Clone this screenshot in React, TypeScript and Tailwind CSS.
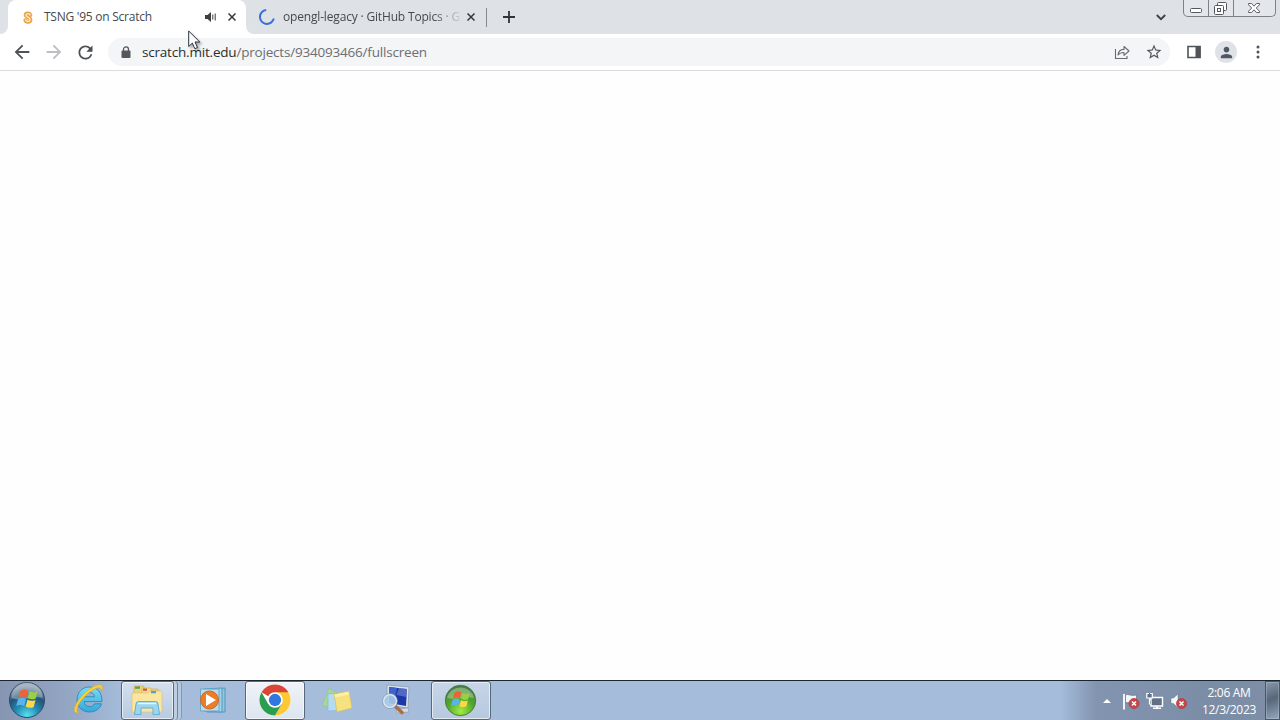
import React from 'react';

const UI_FONT = "font-['Open_Sans','Noto_Sans',sans-serif]";

const MaterialIcon: React.FC<{ d: string; size: number; className?: string }> = ({ d, size, className }) => (
  <svg width={size} height={size} viewBox="0 0 24 24" fill="currentColor" className={`shrink-0 ${className ?? ''}`}>
    <path d={d} />
  </svg>
);

const ARROW_BACK = 'M20 11H7.83l5.59-5.59L12 4l-8 8 8 8 1.41-1.41L7.83 13H20v-2z';
const ARROW_FORWARD = 'M4 11h12.17l-5.59-5.59L12 4l8 8-8 8-1.41-1.41L16.17 13H4v-2z';
const REFRESH =
  'M17.65 6.35A7.958 7.958 0 0 0 12 4c-4.42 0-7.99 3.58-7.99 8s3.57 8 7.99 8c3.73 0 6.84-2.55 7.73-6h-2.08A5.99 5.99 0 0 1 12 18c-3.31 0-6-2.69-6-6s2.69-6 6-6c1.66 0 3.14.69 4.22 1.78L13 11h7V4l-2.35 2.35z';
const STAR =
  'M22 9.24l-7.19-.62L12 2 9.19 8.63 2 9.24l5.46 4.73L5.82 21 12 17.27 18.18 21l-1.63-7.03L22 9.24zM12 15.4l-3.76 2.27 1-4.28-3.32-2.88 4.38-.38L12 6.1l1.71 4.04 4.38.38-3.32 2.88 1 4.28L12 15.4z';
const PERSON = 'M12 12c2.21 0 4-1.79 4-4s-1.79-4-4-4-4 1.79-4 4 1.79 4 4 4zm0 2c-2.67 0-8 1.34-8 4v2h16v-2c0-2.66-5.33-4-8-4z';

const CloseIcon = () => (
  <svg width="8" height="8" viewBox="0 0 8 8" className="shrink-0">
    <path d="M0.5 0.5l7 7M7.5 0.5l-7 7" stroke="#34373b" strokeWidth="1.5" />
  </svg>
);

const ScratchIcon = () => (
  <svg width="10" height="13" viewBox="0 0 10 13" className="shrink-0">
    <path
      d="M7.3 4C6.7 2.1 3 1.7 2.7 4C2.4 6.2 7.6 5.8 7.4 8.8C7.2 11.2 3 11.4 2.4 9.2"
      fill="none"
      stroke="#e9a54a"
      strokeWidth="4"
      strokeLinecap="round"
      strokeLinejoin="round"
    />
    <path
      d="M7.2 3.9C6.3 2.4 3.2 2.3 2.9 4.1C2.7 6 7.3 6 7.1 8.7C6.9 10.9 3.3 10.9 2.5 9"
      fill="none"
      stroke="#fff3df"
      strokeWidth="1.2"
      strokeLinecap="round"
    />
  </svg>
);

const TabStrip = () => (
  <div className="flex h-[34px] shrink-0 bg-[#dee1e6]">
    <div className="flex w-2 items-end bg-white">
      <div className="h-[34px] w-2 rounded-br-lg bg-[#dee1e6]" />
    </div>
    <div className="flex w-[238px] items-center rounded-t-lg bg-white pr-[10px] pl-[15px]">
      <ScratchIcon />
      <span className="ml-[11px] flex-1 whitespace-nowrap text-[12px] tracking-[-0.25px] text-[#45494d]">
        TSNG '95 on Scratch
      </span>
      <svg width="12" height="10" viewBox="0 0 12 10" className="mr-[11px] shrink-0">
        <path d="M0 3h2.500L6 0v10L2.500 7H0z" fill="#3c4043" />
        <path d="M7.800 2.500v5M10.200 1.500v7" stroke="#3c4043" strokeWidth="1" />
      </svg>
      <CloseIcon />
    </div>
    <div className="flex bg-white">
      <div className="flex w-[241px] items-center rounded-bl-lg bg-[#dee1e6] pr-3 pl-[13px]">
        <svg width="16" height="16" viewBox="0 0 16 16" className="shrink-0">
          <path d="M7.200 1A7 7 0 1 0 14.800 9.500" fill="none" stroke="#3b70d9" strokeWidth="2" />
        </svg>
        <div className="ml-[8px] w-[178px] whitespace-nowrap text-[12px] tracking-[-0.17px] text-[#45494d] [mask-image:linear-gradient(to_right,black_150px,transparent_180px)]">
          opengl-legacy · GitHub Topics · G
        </div>
        <div className="ml-auto">
          <CloseIcon />
        </div>
      </div>
    </div>
    <div className="mt-2 -ml-px h-[19px] w-px bg-[#85888d]" />
    <svg width="12" height="12" viewBox="0 0 12 12" className="mt-[11px] ml-4">
      <path d="M6 0v12M0 6h12" stroke="#303438" strokeWidth="1.800" />
    </svg>
    <svg width="10" height="7" viewBox="0 0 10 7" className="mt-[14px] mr-[17px] ml-auto">
      <path d="M.8 1L5 5.200 9.200 1" fill="none" stroke="#3c4043" strokeWidth="1.800" />
    </svg>
    <WindowButtons />
  </div>
);

const WindowButtons = () => (
  <div className="mr-[4px] flex h-[17px] w-[93px] rounded-b-[5px] border border-t-0 border-[#7d8188] bg-[#e3e6ea]">
    <div className="w-[25px] border-r border-[#7d8188]">
      <svg width="24" height="16" viewBox="0 0 24 16">
        <rect x="6.5" y="8.5" width="11" height="4" rx="1" fill="#fff" stroke="#535860" />
      </svg>
    </div>
    <div className="w-[25px] border-r border-[#7d8188]">
      <svg width="24" height="16" viewBox="0 0 24 16" fill="#fff" stroke="#535860">
        <rect x="8.5" y="2.5" width="9" height="8" rx="1" />
        <rect x="5.5" y="5.5" width="9" height="9" rx="1" />
        <rect x="8.5" y="8.5" width="3" height="3" />
      </svg>
    </div>
    <svg width="41" height="16" viewBox="0 0 41 16">
      <path
        d="M14.5 3.5h3l2.5 2.7 2.5-2.7h3v1.3L22.3 8l3.2 3.3v1.2h-3L20 9.8l-2.5 2.7h-3v-1.2L17.7 8l-3.2-3.2z"
        fill="#fff"
        stroke="#5a5f66"
      />
    </svg>
  </div>
);

const Toolbar = () => (
  <div className="flex h-[37px] shrink-0 items-center border-b border-[#dadce0] bg-white pr-[11px] pl-[11px]">
    <MaterialIcon d={ARROW_BACK} size={22} className="text-[#4f5357]" />
    <MaterialIcon d={ARROW_FORWARD} size={22} className="ml-[10px] text-[#bcbec1]" />
    <MaterialIcon d={REFRESH} size={21} className="ml-[10px] text-[#4b4f53]" />
    <div className="ml-3 flex h-7 w-[1062px] items-center rounded-full bg-[#f4f5f6] pr-[7px] pl-[13px]">
      <svg width="10" height="13" viewBox="0 0 10 13" className="shrink-0">
        <path d="M2.5 5V3.400a2.500 2.500 0 0 1 5 0V5" fill="none" stroke="#54585c" strokeWidth="1.300" />
        <rect x=".5" y="4.5" width="9" height="7.5" rx="1" fill="#54585c" />
      </svg>
      <div className="ml-[11px] flex-1 whitespace-nowrap text-[13.5px] tracking-[-0.2px] text-[#6b6f73]">
        <span className="text-[#2b2e31]">scratch.mit.edu</span>/projects/934093466/fullscreen
      </div>
      <svg width="16" height="16" viewBox="0 0 16 16" fill="none" stroke="#676b6f" strokeWidth="1.1" className="mr-[15px]">
        <path d="M1.500 5v9.500h11.500V12" />
        <path d="M4 11c.4-3.700 2.300-5.500 6-5.600V2.500L15 7l-5 4.300V8.500C7 8.500 5.300 9.300 4 11z" strokeLinejoin="round" />
      </svg>
      <MaterialIcon d={STAR} size={18} className="text-[#54585c]" />
    </div>
    <svg width="14" height="14" viewBox="0 0 14 14" className="ml-[17px]">
      <path d="M1 1.500h12v11H1z" fill="#fff" stroke="#505357" strokeWidth="1.600" />
      <path d="M8.500 1h5v12h-5z" fill="#505357" />
    </svg>
    <div className="ml-[14px] flex h-[22px] w-[22px] items-center justify-center rounded-full bg-[#dfe2e7]">
      <MaterialIcon d={PERSON} size={17} className="text-[#505963]" />
    </div>
    <svg width="4" height="14" viewBox="0 0 4 14" fill="#505357" className="ml-auto mr-[9px]">
      <circle cx="2" cy="2" r="1.5" />
      <circle cx="2" cy="7" r="1.5" />
      <circle cx="2" cy="12" r="1.5" />
    </svg>
  </div>
);

// Four waving panes, shared by both Windows buttons
const WindowsFlag = () => (
  <g>
    <path d="M12 10c3-2 6-2 8-.500l-1.700 7c-2.500-1.400-5-1.300-8 .200z" fill="#ed6335" />
    <path d="M21.500 10.300c3 1.500 5.500 1.400 8 .200l-1.800 7c-2.700 1.400-5.200 1-8-.400z" fill="#9bcf45" />
    <path d="M10 18.200c3-1.600 5.500-1.500 8-.200l-1.800 7c-2.400-1.500-5-1.500-8 0z" fill="#58b4ee" />
    <path d="M19.500 18.700c2.800 1.500 5.300 1.500 8 .200l-1.800 7c-2.600 1.300-5.200 1.200-8-.400z" fill="#ffd747" />
  </g>
);

const StartOrb = () => (
  <svg width="38" height="38" viewBox="0 0 38 38">
    <defs>
      <radialGradient id="orb" cx=".5" cy=".95" r=".85">
        <stop offset="0" stopColor="#59e2f2" />
        <stop offset=".4" stopColor="#218bb3" />
        <stop offset=".72" stopColor="#255375" />
        <stop offset="1" stopColor="#8c9cae" />
      </radialGradient>
    </defs>
    <circle cx="19" cy="19" r="17.5" fill="url(#orb)" stroke="#294b69" />
    <path d="M3.500 17a15.500 15.500 0 0 1 31 0c-8-3-22 4-31 0z" fill="#d2dce4" opacity=".4" />
    <WindowsFlag />
  </svg>
);

const ExplorerE = () => (
  <svg width="34" height="34" viewBox="0 0 34 34">
    <defs>
      <linearGradient id="ie" x1="0" y1="0" x2="0" y2="1">
        <stop offset="0" stopColor="#79dcf7" />
        <stop offset="1" stopColor="#35a7da" />
      </linearGradient>
    </defs>
    <path
      d="M17.500 5C9.700 5 5 10.800 5 17.700C5 25 10.300 30 17.500 30c6 0 10.500-3.200 12-8.200h-7c-1 1.800-2.600 2.800-4.800 2.800c-3.300 0-5.300-2-5.500-5h17.700C30.500 11 25.300 5 17.500 5zM12.400 14.800c.600-2.800 2.500-4.300 5.200-4.300s4.600 1.500 5 4.300z"
      fill="url(#ie)"
      stroke="#2482b0"
      strokeWidth=".8"
      fillRule="evenodd"
    />
    <path
      d="M6.500 30.500C1.500 32 1 27 5 20.500C10 12 19 4.500 26 2.800C30 2 31.500 4.500 30 9.500C29.300 6 27.500 5 24 6.500C17 9.500 9.500 17 6.500 23C4.300 27.500 4.500 29.500 6.500 30.500z"
      fill="#f8ce3a"
      stroke="#d5a52b"
      strokeWidth=".5"
    />
  </svg>
);

const FolderIcon = () => (
  <svg width="34" height="32" viewBox="0 0 34 32">
    <path d="M4 2h10v3h14v22H4z" fill="#efd27c" stroke="#cdb05c" strokeWidth=".7" />
    <path d="M12 4h9v3h9v20H12z" fill="#f5da85" stroke="#d3b665" strokeWidth=".7" />
    <path d="M2 9h16l2-2h11l1 1v20H2z" fill="#fae6a0" stroke="#dcc174" strokeWidth=".7" />
    <path d="M5 2.500h5v2.300H5z" fill="#45a95a" />
    <path d="M13 4.500h4v2.300h-4z" fill="#c9603d" />
    <path d="M21 7h5v2.300h-5z" fill="#52a0cf" />
    <path d="M6 20q0-2.500 2.500-2.500h17q2.500 0 2.500 2.500l1.500 10.500h-6.500V24H11v6.500H4.500z" fill="#9bd6f0" stroke="#67afd3" />
    <path d="M8 19.500h18" stroke="#e2f7ff" strokeWidth="1.5" />
  </svg>
);

const MediaPlayerIcon = () => (
  <svg width="28" height="28" viewBox="0 0 28 28">
    <path d="M8 4l18-2v24H8z" fill="#8fc6e0" stroke="#5598bd" />
    <path d="M5 3l18-1v24L5 25z" fill="#a6d2e7" stroke="#5598bd" />
    <path d="M1.500 3H20v22H1.500z" fill="#bbdbeb" stroke="#68a8c9" />
    <circle cx="10.5" cy="14" r="9" fill="#ec7c26" stroke="#c7682c" />
    <path d="M7 8l10 6-10 6z" fill="#fff" />
  </svg>
);

const ChromeIcon = () => (
  <svg width="34" height="34" viewBox="0 0 48 48">
    <circle cx="24" cy="24" r="22" fill="#fff" />
    <path d="M24 24L4.950 13A22 22 0 0 1 43.050 13z" fill="#db4538" />
    <path d="M24 13h19.050A22 22 0 0 1 24 46l9.530-16.500z" fill="#fcc934" />
    <path d="M14.470 29.500L4.950 13A22 22 0 0 0 24 46l9.530-16.500z" fill="#2c9c50" />
    <circle cx="24" cy="24" r="11" fill="#fff" />
    <circle cx="24" cy="24" r="8.7" fill="#3078df" />
  </svg>
);

const StickyNotesIcon = () => (
  <svg width="32" height="28" viewBox="0 0 32 28">
    <path d="M8 1l8 5-5 16-10-4z" fill="#a8d59a" stroke="#8bbd87" strokeWidth=".5" />
    <path d="M7 7l12-1 1 17-13 1z" fill="#b4dcf0" stroke="#77b3d3" strokeWidth=".5" />
    <path d="M13 7l15-3 3 17-15 4z" fill="#f6e180" stroke="#d4bb57" strokeWidth=".6" />
    <path d="M13.500 7.500l14-2.800.500 3-14 2.800z" fill="#fdf0a5" />
  </svg>
);

const ComputerSearchIcon = () => (
  <svg width="32" height="32" viewBox="0 0 32 32">
    <path d="M5 1l22 2-1 21-21-3z" fill="#dce3ec" stroke="#8c9cb0" strokeWidth=".8" />
    <path d="M7 3l18 2-1 17-17-3z" fill="#1d37a8" />
    <path d="M7 3l8 .900-3 16-5-1z" fill="#3e63c9" />
    <path d="M17 4l8 1-.500 8-10-2z" fill="#7893dc" opacity=".55" />
    <path d="M14 25l12-1 1 4-12 1z" fill="#d5dbe1" stroke="#8994a1" strokeWidth=".6" />
    <path d="M13 22l7 6.500" stroke="#ad6c43" strokeWidth="3.6" strokeLinecap="round" />
    <circle cx="8" cy="17" r="6.5" fill="#a9cbe8" fillOpacity=".88" stroke="#e0e9f0" strokeWidth="1.6" />
    <circle cx="8" cy="17" r="7.5" fill="none" stroke="#7b93ad" strokeWidth=".6" />
  </svg>
);

const GreenWindowsIcon = () => (
  <svg width="33" height="33" viewBox="0 0 38 38">
    <defs>
      <radialGradient id="green" cx=".5" cy=".85" r=".8">
        <stop offset="0" stopColor="#a1ec44" />
        <stop offset=".55" stopColor="#52a72c" />
        <stop offset="1" stopColor="#477f49" />
      </radialGradient>
    </defs>
    <circle cx="19" cy="19" r="17.5" fill="url(#green)" stroke="#42753c" />
    <path d="M3.500 16a16 16 0 0 1 31 0c-10-3-22 3-31 0z" fill="#c5deb4" opacity=".45" />
    <WindowsFlag />
  </svg>
);

const RunningButton: React.FC<{ width: string; children: React.ReactNode }> = ({ width, children }) => (
  <div
    className={`flex h-[39px] shrink-0 items-center justify-center rounded-[3px] border border-[#58687b] pr-px pb-px shadow-[inset_0_0_0_1px_rgba(255,255,255,0.6)] ${width}`}
  >
    {children}
  </div>
);

const ErrorBadge = ({ cx, cy }: { cx: number; cy: number }) => (
  <g>
    <circle cx={cx} cy={cy} r="5" fill="#cf4444" stroke="#a63b43" strokeWidth=".7" />
    <path
      d={`M${cx - 2} ${cy - 2}l4 4M${cx + 2} ${cy - 2}l-4 4`}
      stroke="#fff"
      strokeWidth="1.5"
    />
  </g>
);

const Tray = () => (
  <div className="ml-auto flex h-full w-[220px] items-center bg-[linear-gradient(to_right,#a5bedb_0px,#8294b0_36px,#7b8da6_150px,#7e8fa7_220px)]">
    <svg width="8" height="4" viewBox="0 0 8 4" className="mt-[1px] ml-[43px]">
      <path d="M0 4l4-4 4 4z" fill="#fff" />
    </svg>
    <svg width="18" height="18" viewBox="0 0 18 18" className="mt-[3px] ml-[11px]">
      <path d="M2 1v15.500" stroke="#fff" strokeWidth="1.8" />
      <path d="M3.500 2c3-1.500 5 1.500 11 0v8c-5 1.500-7-1.500-11 0z" fill="#f4f6f8" stroke="#5f6878" strokeWidth=".6" />
      <ErrorBadge cx={12} cy={10.5} />
    </svg>
    <svg width="18" height="17" viewBox="0 0 18 17" className="mt-[1px] ml-[6px]">
      <path d="M5 4.500h11.500v8.500H5z" fill="#627086" stroke="#fff" strokeWidth="1.4" />
      <path d="M11 13v2M7 15.300h8" stroke="#fff" strokeWidth="1.6" />
      <path d="M.800.500h5.500v4.500H.800zM3.500 5v6H5" fill="#627086" stroke="#fff" strokeWidth="1.2" />
      <path d="M3.500 0v3" stroke="#627086" strokeWidth="1.2" />
    </svg>
    <svg width="18" height="18" viewBox="0 0 18 18" className="mt-[3px] ml-[6px]">
      <path d="M1 5h2.500L8 1v14l-4.500-4.500H1z" fill="#f5f7f9" stroke="#67758a" strokeWidth=".5" />
      <ErrorBadge cx={11.5} cy={10.5} />
    </svg>
    <div className="ml-[11px] w-[60px] text-center text-[12px] leading-[17px] tracking-[-0.3px] whitespace-nowrap text-white">
      <div>2:06 AM</div>
      <div>12/3/2023</div>
    </div>
    <div className="ml-auto h-full w-[15px] border border-[#47566a] bg-[linear-gradient(160deg,#8897aa_0%,#58677a_45%,#65768b_60%,#97a8bc_100%)] shadow-[inset_0_0_0_1px_rgba(190,205,220,0.35)]" />
  </div>
);

const Taskbar = () => (
  <div className="flex h-10 shrink-0 items-center border-t border-[#1c2631] bg-[linear-gradient(to_right,#8695b2_0px,#92a5c2_65px,#a5bddb_125px,#a5bddb_100%)]">
    <div className="flex w-[54px] justify-center pb-px">
      <StartOrb />
    </div>
    <div className="ml-[4px] flex w-[62px] justify-center pb-[3px]">
      <ExplorerE />
    </div>
    <div className="ml-px flex h-[39px] w-[61px]">
      <RunningButton width="w-[53px] bg-[linear-gradient(#d3dfed,#b8cbe1)]">
        <FolderIcon />
      </RunningButton>
      <div className="w-[4px] rounded-r-sm border-r border-[#71849b] bg-[#bdcee2]" />
      <div className="w-[4px] rounded-r-sm border-r border-[#8698ae] bg-[#b4c8de]" />
    </div>
    <div className="flex w-[62px] justify-center pr-px pb-px">
      <MediaPlayerIcon />
    </div>
    <div className="ml-px flex">
      <RunningButton width="w-[60px] bg-[linear-gradient(#f0f3f8,#dce5f0)]">
        <ChromeIcon />
      </RunningButton>
    </div>
    <div className="flex w-[64px] justify-center">
      <StickyNotesIcon />
    </div>
    <div className="flex w-[57px] justify-center pb-px">
      <ComputerSearchIcon />
    </div>
    <div className="ml-[5px] flex">
      <RunningButton width="w-[60px] bg-[linear-gradient(#c7d5e7,#b6c9df)]">
        <GreenWindowsIcon />
      </RunningButton>
    </div>
    <Tray />
  </div>
);

const App: React.FC = () => {
  return (
    <div className={`relative flex h-[720px] w-[1280px] flex-col overflow-hidden bg-white ${UI_FONT}`}>
      <TabStrip />
      <Toolbar />
      <main className="flex-1 bg-[#fefefe]" />
      <Taskbar />

      {/* Mouse pointer */}
      <svg
        width="14"
        height="20"
        viewBox="0 0 14 20"
        className="pointer-events-none absolute top-[30px] left-[188px] drop-shadow-[2px_2px_1px_rgba(0,0,0,0.3)]"
      >
        <path d="M.7 1v15.500l3.600-3.400 2.500 5.600 2.700-1.200L7 12h4.800z" fill="#fff" stroke="#26313d" strokeWidth="1" />
      </svg>
    </div>
  );
};

export default App;
